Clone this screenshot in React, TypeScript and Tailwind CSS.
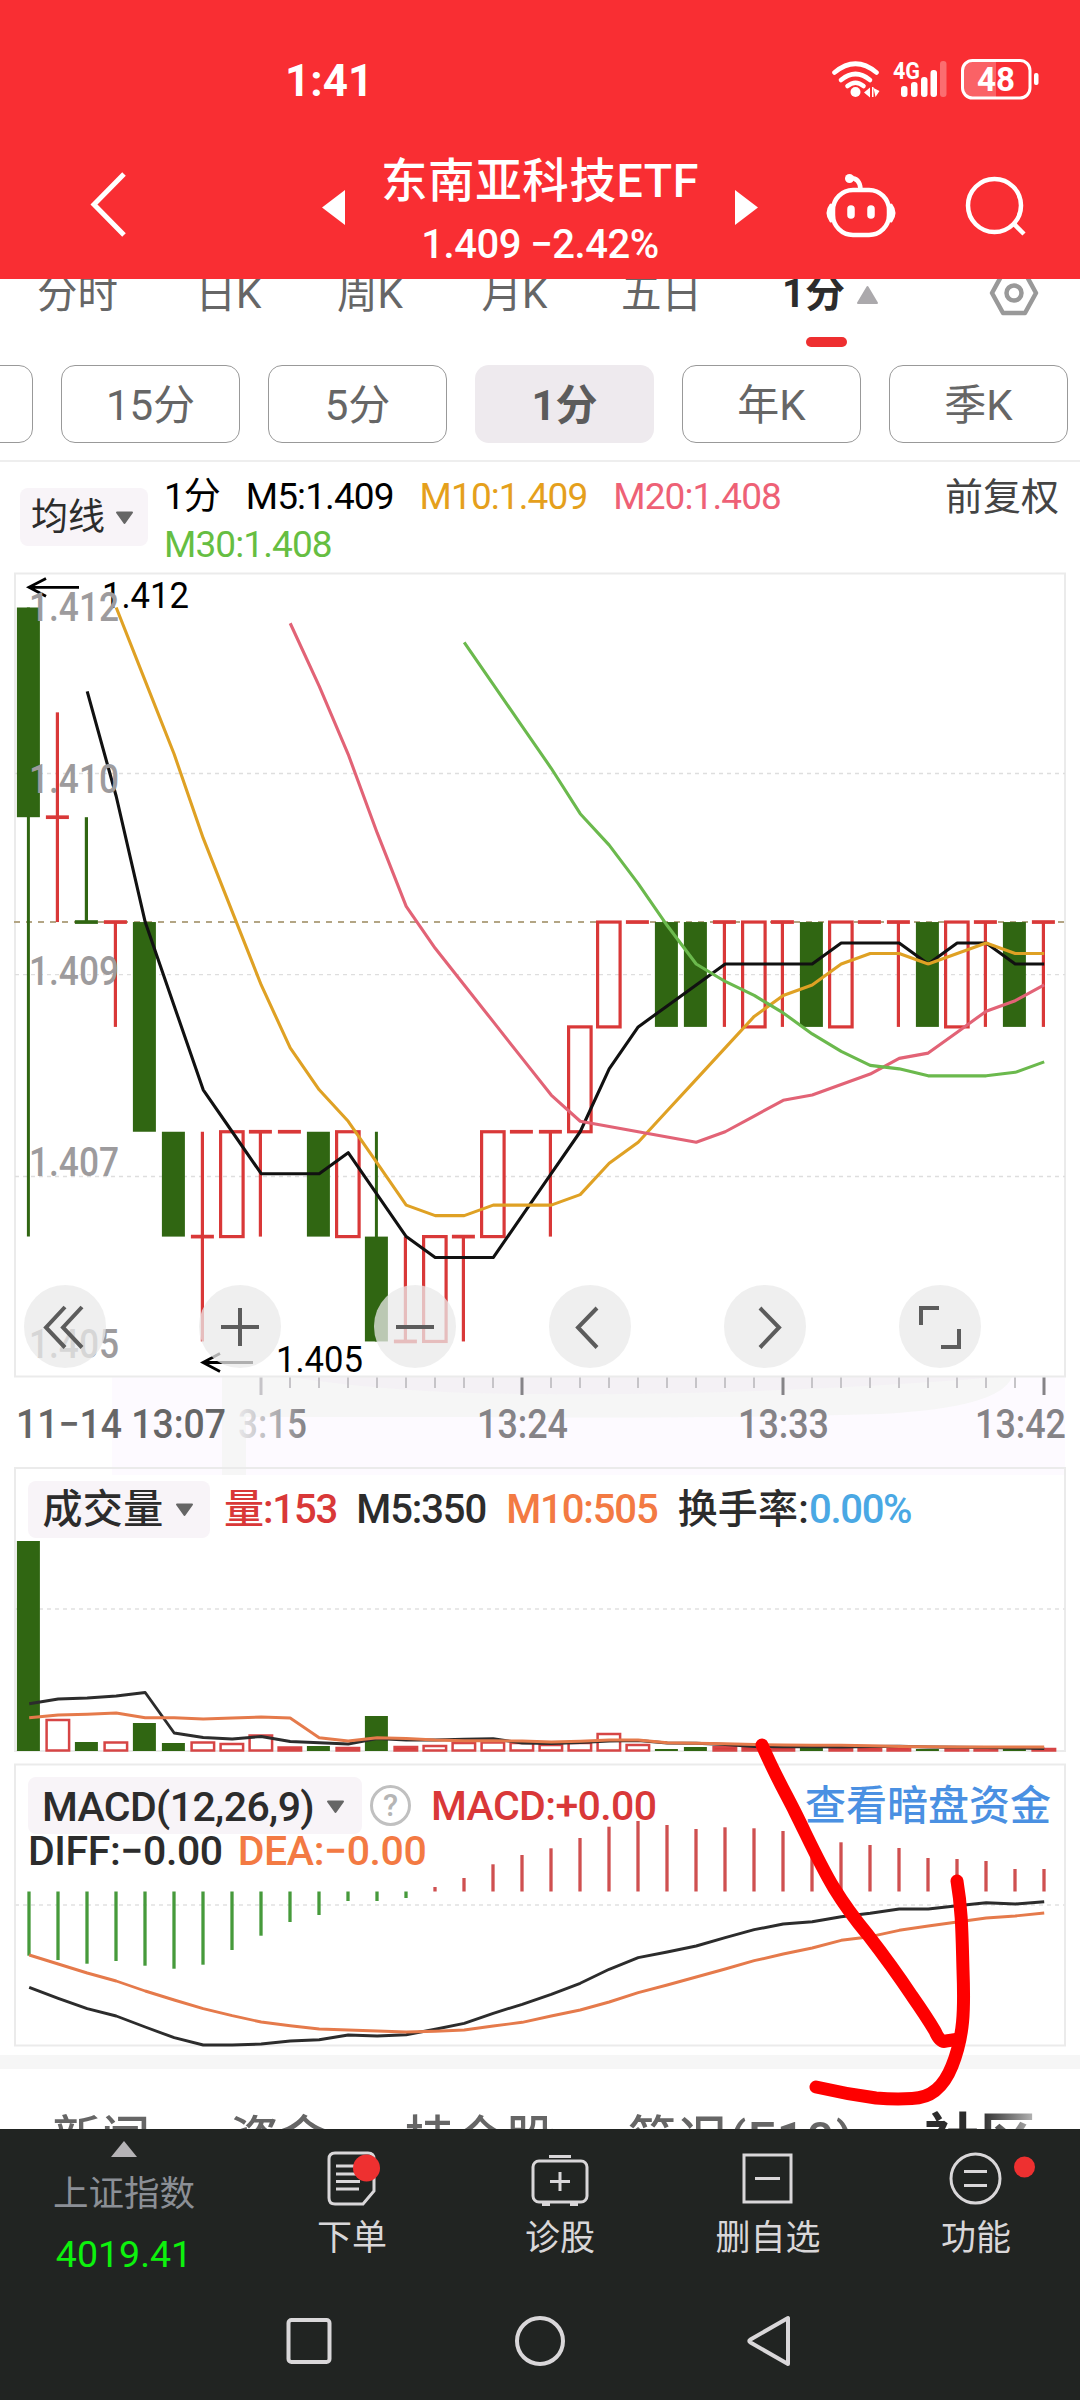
import type { ReactNode } from 'react';

const STEP = 29;
const X0 = 28.4;
const TOP = 607.5;
const UNIT = 104.85;

const cx = (i: number) => X0 + i * STEP;
const ly = (level: number) => TOP + level * UNIT;

// levels are price steps below the session high (0 = 1.412)
interface Candle {
  open: number;
  close: number;
  high?: number;
  low?: number;
  down?: boolean;
}

const candles: Candle[] = [
  { open: 0, close: 2, low: 6 },
  { open: 2, close: 2, high: 1, low: 3 },
  { open: 3, close: 3, high: 2, down: true },
  { open: 3, close: 3, low: 4 },
  { open: 3, close: 5 },
  { open: 5, close: 6 },
  { open: 6, close: 6, high: 5, low: 7 },
  { open: 6, close: 5 },
  { open: 5, close: 5, low: 6 },
  { open: 5, close: 5 },
  { open: 5, close: 6 },
  { open: 6, close: 5 },
  { open: 6, close: 7, high: 5 },
  { open: 7, close: 7, high: 6 },
  { open: 7, close: 6 },
  { open: 6, close: 6, low: 7 },
  { open: 6, close: 5 },
  { open: 5, close: 5 },
  { open: 5, close: 5, low: 6 },
  { open: 5, close: 4 },
  { open: 4, close: 3 },
  { open: 3, close: 3 },
  { open: 3, close: 4 },
  { open: 3, close: 4 },
  { open: 3, close: 3, low: 4 },
  { open: 4, close: 3 },
  { open: 3, close: 3, low: 4 },
  { open: 3, close: 4 },
  { open: 4, close: 3 },
  { open: 3, close: 3 },
  { open: 3, close: 3, low: 4 },
  { open: 3, close: 4 },
  { open: 4, close: 3 },
  { open: 3, close: 3, low: 4 },
  { open: 3, close: 4 },
  { open: 3, close: 3, low: 4 },
];

// closes of the bars left of the visible window, needed for the averages
const history = [-7, -7, -7, -9, -6, -8, -8, -7, -2, -1, -2, -2, -2, -1];
const closes = [...history, ...candles.map((c) => c.close)];

function average(n: number) {
  const points: string[] = [];
  candles.forEach((_, i) => {
    const end = i + history.length + 1;
    if (end < n) return;
    const value = closes.slice(end - n, end).reduce((a, b) => a + b, 0) / n;
    if (value >= 0) points.push(`${cx(i) + 0.8},${ly(value)}`);
  });
  return points.join(' ');
}

const line = (values: number[]) => values.map((v, i) => `${cx(i) + 0.8},${v}`).join(' ');

// g = filled green, r = hollow red
const volumes: [string, number][] = [
  ['g', 210], ['r', 31], ['g', 9], ['r', 8.5], ['g', 28], ['g', 8], ['r', 8.5], ['r', 7], ['r', 15.5],
  ['r', 3.5], ['g', 5], ['r', 3], ['g', 35], ['r', 4], ['r', 5], ['r', 8], ['r', 8.5], ['r', 8],
  ['r', 6], ['r', 8], ['r', 17], ['r', 6], ['g', 2], ['g', 4], ['r', 4], ['r', 4], ['r', 4],
  ['g', 3.5], ['r', 3.5], ['r', 4], ['r', 4], ['g', 2], ['r', 3], ['r', 3], ['g', 2], ['r', 2],
];
const volM5 = [
  1703.7, 1699, 1698, 1696, 1692.5, 1733, 1737.5, 1739, 1736.5, 1741.5, 1742.7, 1744, 1738.5, 1740, 1740,
  1739.3, 1738.7, 1743, 1743.5, 1742.5, 1741, 1740.5, 1743, 1743.3, 1744.5, 1746.5, 1746.7, 1746.7, 1747,
  1746.5, 1746.3, 1747, 1747.2, 1747.5, 1748, 1748.5,
];
const volM10 = [
  1717.7, 1715, 1714.3, 1713, 1717.7, 1717.7, 1719, 1718, 1717, 1718, 1737.7, 1741, 1737.7, 1738.5, 1740,
  1740.7, 1740.7, 1741, 1742, 1741.3, 1740, 1740, 1742.7, 1743.2, 1743.7, 1744.5, 1745, 1745.3, 1745.3,
  1745.7, 1746.5, 1746.7, 1747, 1747, 1747, 1747,
];

const macd = [
  1955.7, 1960, 1963.7, 1961, 1965.7, 1968.7, 1964.7, 1950, 1935.7, 1922, 1915, 1901, 1901, 1898, 1887,
  1878, 1864.3, 1855, 1848.3, 1838, 1826.7, 1821, 1825, 1829, 1827.3, 1828.3, 1831, 1838.3, 1842.3, 1845,
  1848, 1858, 1859, 1861, 1869, 1869,
];
const diff = [
  1987.3, 1998.3, 2008.7, 2016, 2027, 2037.7, 2045, 2045, 2044, 2041, 2039.7, 2035, 2036, 2034.7, 2029.3,
  2023.3, 2013.3, 2004.3, 1994.3, 1983.3, 1969.3, 1957.7, 1952, 1946, 1937.7, 1929.7, 1924, 1921.7, 1916.7,
  1913.3, 1909, 1909, 1905.7, 1902.7, 1904, 1901.7,
];
const dea = [
  1955, 1964, 1973, 1981, 1991, 2000, 2008.7, 2015.7, 2022, 2025.7, 2029, 2030, 2031, 2032, 2031.3, 2030,
  2026, 2022.3, 2016, 2010, 2002, 1992.7, 1985, 1977, 1969, 1960.7, 1954, 1948, 1940.3, 1936.7, 1930.3,
  1926, 1922, 1918, 1916, 1913,
];

const RED = '#d93838';
const GREEN = '#306612';

function StatusBar() {
  return (
    <div className="flex h-[158px] items-start pt-[56px]">
      <span className="ml-[285px] text-[44px] leading-[50px] font-bold">1:41</span>
      <svg className="mt-[1px] ml-auto mr-[38px]" width="214" height="50" viewBox="828 57 214 50" fill="none">
        <g stroke="#fff" strokeWidth="4.6" strokeLinecap="round">
          <path d="M834.500 72.500q21-17.500 42 0" />
          <path d="M841 80q14.500-12 29 0" />
          <path d="M847.500 86q8-6.500 16 0" />
        </g>
        <circle cx="855.500" cy="92" r="5" fill="#fff" />
        <path d="M864 92.500l6-5v10zM872 87l1.500 0v10h-1.500zM873.500 88l6 3-4 6z" fill="#fff" />
        <text x="893" y="79" fontSize="23" fontWeight="700" fill="#fff" textLength="27" lengthAdjust="spacingAndGlyphs">
          4G
        </text>
        <g fill="#fff">
          <rect x="901" y="86" width="6.500" height="11" rx="3" />
          <rect x="911" y="82" width="6.500" height="15" rx="3" />
          <rect x="921" y="77" width="6.500" height="20" rx="3" />
          <rect x="930.500" y="70" width="6.500" height="27" rx="3" />
          <rect x="940" y="61" width="6.500" height="36" rx="3" opacity=".3" />
        </g>
        <path d="M972 61h24v36h-24q-10 0-10-9v-18q0-9 10-9z" fill="#fff" opacity=".25" />
        <rect x="962.500" y="60.500" width="67.500" height="37.500" rx="10" stroke="#fff" strokeWidth="3" />
        <rect x="1034" y="73" width="4.500" height="12" rx="2" fill="#fff" />
        <text x="977" y="91" fontSize="33" fontWeight="700" fill="#fff" textLength="38" lengthAdjust="spacingAndGlyphs">
          48
        </text>
      </svg>
    </div>
  );
}

function TitleBar() {
  return (
    <div className="flex h-[121px] items-start">
      <svg className="mt-[12px] ml-[86px]" width="44" height="70" viewBox="0 0 44 70">
        <path d="M38 4L8 34.500l30 30.500" fill="none" stroke="#fff" strokeWidth="5" />
      </svg>
      <svg className="mt-[31px] ml-[191px]" width="24" height="37" viewBox="0 0 24 37">
        <path d="M24 1v35L1 18.500z" fill="#fff" />
      </svg>
      <div className="flex w-[390px] flex-col items-center">
        <h1 className="mt-[-6px] text-[46.5px] leading-[58px] font-medium tracking-[0.6px] whitespace-nowrap">
          东南亚科技ETF
        </h1>
        <p className="mt-[12px] text-[40px] leading-[46px] font-medium tracking-[-0.5px]">1.409 −2.42%</p>
      </div>
      <svg className="mt-[31px]" width="24" height="37" viewBox="0 0 24 37">
        <path d="M0 1v35l23-17.500z" fill="#fff" />
      </svg>
      <svg className="mt-[12px] ml-[65px]" width="76" height="70" viewBox="824 170 76 70" fill="none" stroke="#fff">
        <rect x="833" y="190" width="56" height="45" rx="20" strokeWidth="4.500" />
        <path d="M831 205q-6 8 0 16zM891 205q6 8 0 16z" fill="#fff" strokeWidth="3" strokeLinejoin="round" />
        <path d="M850 178q10 0 10.500 11" strokeWidth="4.500" />
        <circle cx="849.500" cy="178.500" r="4.500" fill="#fff" stroke="none" />
        <path d="M851 209v6M871 209v6" strokeWidth="7.500" strokeLinecap="round" />
      </svg>
      <svg className="mt-[12px] ml-[62px]" width="70" height="70" viewBox="962 170 70 70" fill="none" stroke="#fff">
        <circle cx="994.500" cy="205.500" r="26.500" strokeWidth="4.500" />
        <path d="M1013 223l11 11" strokeWidth="4.500" />
      </svg>
    </div>
  );
}

const periodTabs = [
  { label: '分时', width: 'w-[155px]' },
  { label: '日K', width: 'w-[147px]' },
  { label: '周K', width: 'w-[136px]' },
  { label: '月K', width: 'w-[153px]' },
  { label: '五日', width: 'w-[141px]' },
];

function PeriodTabs() {
  return (
    <div className="h-[86px] overflow-hidden">
      <div className="-mt-[13px] flex h-[56px] items-center text-[40.5px] text-[#666]">
        {periodTabs.map((tab) => (
          <span key={tab.label} className={`${tab.width} text-center`}>
            {tab.label}
          </span>
        ))}
        <span className="ml-[50px] text-[40px] font-bold text-[#2c2c2c]">1分</span>
        <svg className="mt-[1px] ml-[11px]" width="23" height="20" viewBox="0 0 23 20">
          <path d="M11.500 2l9.500 16H2z" fill="#aba9ac" stroke="#aba9ac" strokeWidth="2" strokeLinejoin="round" />
        </svg>
        <svg className="-mt-[3px] ml-auto mr-[41px]" width="50" height="50" viewBox="0 0 50 50" fill="none" stroke="#999">
          <path d="M3 25L14 5h22l11 20-11 20H14z" strokeWidth="4.500" strokeLinejoin="round" />
          <circle cx="25" cy="25" r="7.500" strokeWidth="4.500" />
        </svg>
      </div>
      <div className="mt-[15px] ml-[806px] h-[10px] w-[41px] rounded-[5px] bg-[#ee2f30]" />
    </div>
  );
}

function MinutePills() {
  const pill = 'flex h-[78px] w-[179px] shrink-0 items-center justify-center rounded-[14px] pt-[3px] text-[42px]';
  return (
    <div className="flex h-[97px] gap-[28px] overflow-hidden border-b-2 border-[#eee]">
      <div className="-ml-[146px] h-[78px] w-[179px] shrink-0 rounded-[14px] border-[1.5px] border-[#999]" />
      {['15分', '5分', '1分', '年K', '季K'].map((label) => (
        <div
          key={label}
          className={`${pill} ${label === '1分' ? 'bg-[#eeeaee] font-bold text-[#5c5c5c]' : 'border-[1.5px] border-[#999] text-[#666]'}`}
        >
          {label}
        </div>
      ))}
    </div>
  );
}

function Caret() {
  return (
    <svg width="19" height="14" viewBox="0 0 19 14">
      <path d="M2 1.500h15L9.500 12z" fill="#666" stroke="#666" strokeWidth="2" strokeLinejoin="round" />
    </svg>
  );
}

function AverageLegend() {
  return (
    <div className="flex h-[102px] items-start pt-[10px] text-[37px] leading-[50px]">
      <div className="mt-[16px] ml-[20px] flex h-[58px] w-[128px] items-center justify-center gap-[10px] rounded-[8px] bg-[#f8f4f8] pt-[2px] pr-[3px] text-[37px] text-[#2c2c2c]">
        均线
        <Caret />
      </div>
      <div className="ml-[16px] flex w-[660px] flex-wrap gap-x-[26px] tracking-[-0.9px] text-black">
        <span className="tracking-[-1px]">1分</span>
        <span>M5:1.409</span>
        <span className="text-[#e5a01c]">M10:1.409</span>
        <span className="text-[#ee6176]">M20:1.408</span>
        <span className="-mt-[2px] text-[#66be42]">M30:1.408</span>
      </div>
      <span className="ml-auto mr-[21px] text-[38px] text-[#444]">前复权</span>
    </div>
  );
}

function CandleBar({ candle, index }: { candle: Candle; index: number }) {
  const { open, close, high = Math.min(open, close), low = Math.max(open, close) } = candle;
  const x = cx(index);
  const green = close > open || candle.down;
  const color = green ? GREEN : RED;
  if (open === close) {
    return (
      <g stroke={color} strokeWidth="3.700">
        <path d={`M${x - 11.5} ${ly(open)}h23`} />
        <path d={`M${x} ${ly(high)}V${ly(low)}`} strokeWidth="3.200" />
      </g>
    );
  }
  const y = ly(Math.min(open, close));
  const h = Math.abs(open - close) * UNIT;
  return (
    <g>
      {(high < Math.min(open, close) || low > Math.max(open, close)) && (
        <path d={`M${x} ${ly(high)}V${ly(low)}`} stroke={color} strokeWidth="3" />
      )}
      {green ? (
        <rect x={x - 11.5} y={y} width="23" height={h} fill={color} />
      ) : (
        <rect x={x - 10.8} y={y} width="22.500" height={h} fill="none" stroke={color} strokeWidth="3.200" />
      )}
    </g>
  );
}

const priceLabels: [string, number][] = [
  ['1.412', 621.3],
  ['1.410', 793],
  ['1.409', 985],
  ['1.407', 1175.7],
  ['1.405', 1357.7],
];

const toolIcons = [
  'M41 21L22 41.500l19 20M58 21L39 41.500l19 20',
  'M41 22v38M22 41h38',
  'M22 41h38',
  'M48 22L29 41.500l19 20',
  'M36 22l19 19.500-19 20',
  'M22 39V22h18M60 43v18H42',
];

function PriceChart() {
  return (
    <div className="relative h-[900px]">
      <svg width="1080" height="900" viewBox="0 564 1080 900">
        <defs>
          <linearGradient id="fade" gradientUnits="userSpaceOnUse" x1="235" x2="305" y1="0" y2="0">
            <stop offset="0" stopColor="#eeedef" />
            <stop offset="1" stopColor="#858387" />
          </linearGradient>
        </defs>
        <path d="M112 1377H1065V1464H112z" fill="#fdfaff" />
        <path d="M222 1377H1012Q1000 1408 880 1414Q700 1419 480 1417H246V1464H222z" fill="#f6f6f6" />
        <path d="M290 1377H1000Q760 1396 540 1394Q400 1394 290 1377z" fill="#f4f1f5" />
        <rect x="15" y="573.500" width="1050" height="803" fill="none" stroke="#ebebeb" strokeWidth="2" />
        <path d="M15 773.500H1065M15 974.700H1065M15 1176.500H1065" stroke="#dedede" strokeWidth="1.300" strokeDasharray="4 4" />
        <path d="M14 922H1065" stroke="#b3a584" strokeWidth="2" strokeDasharray="6 6" />
        {candles.map((c, i) => (
          <CandleBar key={i} candle={c} index={i} />
        ))}
        <g fill="none" strokeWidth="3.100" strokeLinejoin="round">
          <polyline points={average(5)} stroke="#111" />
          <polyline points={average(10)} stroke="#dfa124" />
          <polyline points={average(20)} stroke="#e26376" />
          <polyline points={average(30)} stroke="#6bb94d" />
        </g>
        <g fill="none" stroke="#000" strokeWidth="2.800">
          <path d="M79 587.300H29M46 578.500L29 587.300l17 9" />
          <path d="M253 1362.500H203M220 1353.500L203 1362.500l17 9" />
        </g>
        <g fill="#000" fontSize="36">
          <text x="102" y="608" textLength="87" lengthAdjust="spacingAndGlyphs">1.412</text>
          <text x="276" y="1372" textLength="87" lengthAdjust="spacingAndGlyphs">1.405</text>
        </g>
        <g fill="#9d9b9d" fontSize="40.500" fontWeight="500">
          {priceLabels.map(([label, y]) => (
            <text key={label} x="29" y={y} textLength="90" lengthAdjust="spacingAndGlyphs">
              {label}
            </text>
          ))}
        </g>
        {Array.from({ length: 28 }, (_, k) => k + 8).map((i) => (
          <path
            key={i}
            d={`M${cx(i) + 0.6} 1377.500V${(i - 8) % 9 === 0 ? 1395 : 1388}`}
            stroke={(i - 8) % 9 === 0 && i > 8 ? '#858387' : '#c6c4c8'}
            strokeWidth={(i - 8) % 9 === 0 ? 3 : 2}
          />
        ))}
        <g fill="#858387" fontSize="40.500" fontWeight="500">
          <text x="16" y="1437.700" fill="#666" textLength="210" lengthAdjust="spacingAndGlyphs">11−14 13:07</text>
          <text x="238" y="1437.700" fill="url(#fade)" textLength="69" lengthAdjust="spacingAndGlyphs">3:15</text>
          <text x="477" y="1437.700" textLength="91" lengthAdjust="spacingAndGlyphs">13:24</text>
          <text x="738" y="1437.700" textLength="91" lengthAdjust="spacingAndGlyphs">13:33</text>
          <text x="975" y="1437.700" textLength="91" lengthAdjust="spacingAndGlyphs">13:42</text>
        </g>
      </svg>
      <div className="absolute top-[721px] left-[24px] flex gap-[93px]">
        {toolIcons.map((d) => (
          <button key={d} className="h-[83px] w-[82px] rounded-full bg-[#e9e9e9]/75">
            <svg width="82" height="82" viewBox="0 0 82 82" fill="none" stroke="#5c5c5c" strokeWidth="4">
              <path d={d} />
            </svg>
          </button>
        ))}
      </div>
    </div>
  );
}

function VolumeChart() {
  return (
    <div className="relative h-[294px]">
      <svg className="absolute inset-0" width="1080" height="294" viewBox="0 1464 1080 294">
        <path d="M112 1464H1065V1475H112z" fill="#fdfaff" />
        <path d="M222 1464H246V1475H222z" fill="#f6f6f6" />
        <rect x="15" y="1468" width="1050" height="283" fill="none" stroke="#ebebeb" strokeWidth="2" />
        <path d="M15 1609H1065" stroke="#e8e8e8" strokeWidth="2" strokeDasharray="4 4" />
        {volumes.map(([kind, h], i) =>
          kind === 'g' ? (
            <rect key={i} x={cx(i) - 11.5} y={1751 - h} width="23" height={h} fill={GREEN} />
          ) : (
            <rect
              key={i}
              x={cx(i) - 10.8}
              y={1751 - h}
              width="22.500"
              height={Math.max(h - 0.5, 0.5)}
              fill={h < 5 ? RED : 'none'}
              stroke="#d64545"
              strokeWidth="2.500"
            />
          ),
        )}
        <g fill="none" strokeWidth="2.900" strokeLinejoin="round">
          <polyline points={line(volM5)} stroke="#2c2c2c" />
          <polyline points={line(volM10)} stroke="#e57a4b" />
        </g>
      </svg>
      <div className="relative flex items-center pt-[17px] pl-[28px] text-[40px] leading-[57px] font-medium tracking-[-1.1px]">
        <div className="flex h-[57px] w-[182px] items-center justify-center gap-[11px] rounded-[8px] bg-[#f8f4f8] pr-[2px] tracking-[0.4px] text-[#2c2c2c]">
          成交量
          <Caret />
        </div>
        <span className="ml-[14px] text-[#d93838]">量:153</span>
        <span className="ml-[19px] text-[#2c2c2c]">M5:350</span>
        <span className="ml-[20px] text-[#f37a43]">M10:505</span>
        <span className="ml-[20px] tracking-[0.2px] text-[#2c2c2c]">换手率:</span>
        <span className="tracking-[-1.3px] text-[#4aa8e4]">0.00%</span>
      </div>
    </div>
  );
}

function MacdChart() {
  return (
    <div className="relative h-[297px]">
      <svg className="absolute inset-0" width="1080" height="297" viewBox="0 1758 1080 297">
        <rect x="15" y="1764.500" width="1050" height="281" fill="none" stroke="#ebebeb" strokeWidth="2" />
        <path d="M15 1905H1065" stroke="#e8e8e8" strokeWidth="2" strokeDasharray="4 4" />
        {macd.map((y, i) => (
          <path
            key={i}
            d={`M${cx(i) + 0.6} 1891.500V${y}`}
            stroke={y > 1891 ? '#469a3b' : '#cf5050'}
            strokeWidth="3.300"
          />
        ))}
        <g fill="none" strokeWidth="2.900" strokeLinejoin="round">
          <polyline points={line(diff)} stroke="#2c2c2c" />
          <polyline points={line(dea)} stroke="#e57a4b" />
        </g>
      </svg>
      <div className="relative flex items-center pt-[18px] pl-[28px] text-[41px] leading-[57px] font-medium tracking-[-0.6px] text-[#2c2c2c]">
        <div className="flex h-[57px] w-[334px] items-center justify-center gap-[12px] rounded-[8px] bg-[#f8f4f8] pt-[3px] pr-[3px]">
          MACD(12,26,9)
          <Caret />
        </div>
        <div className="ml-[8px] flex h-[41px] w-[41px] items-center justify-center rounded-full border-3 border-[#c0c0c0] text-[31px] tracking-normal text-[#b5b5b5]">
          ?
        </div>
        <span className="mt-[2px] ml-[20px] text-[#d93838]">MACD:+0.00</span>
        <span className="mt-[2px] ml-auto mr-[29px] tracking-normal text-[#4a90e2]">查看暗盘资金</span>
      </div>
      <div className="relative -mt-[8px] ml-[28px] flex gap-[15px] text-[41px] leading-[48px] font-medium tracking-[-0.4px] text-[#2c2c2c]">
        <span>DIFF:−0.00</span>
        <span className="text-[#f37a43]">DEA:−0.00</span>
      </div>
    </div>
  );
}

function InfoTabs() {
  return (
    <div className="h-[60px] overflow-hidden pt-[39px] text-[49px] leading-[64px] whitespace-nowrap text-[#666]">
      <div className="flex font-medium">
        <span className="ml-[52px]">新闻</span>
        <span className="ml-[80px]">资金</span>
        <span className="ml-[77px] tracking-[1.5px]">持仓股</span>
        <span className="ml-[71px] tracking-[1.8px]">简况(F10)</span>
        <span className="ml-auto mr-[44px] bg-linear-to-r from-[#2c2c2c] from-50% to-[#bbb] bg-clip-text text-[56px] font-bold text-transparent">
          社区
        </span>
      </div>
    </div>
  );
}

function NavItem({ label, children }: { label: string; children: ReactNode }) {
  return (
    <div className="flex w-[208px] flex-col items-center pt-[16px]">
      <svg width="120" height="66" viewBox="-60 -33 120 66" fill="none" stroke="#d9d7d9" strokeWidth="3">
        {children}
      </svg>
      <span className="mt-[5px] text-[35px] leading-[46px] text-[#d9d7d9]">{label}</span>
    </div>
  );
}

function BottomNav() {
  return (
    <div className="flex h-[165px]">
      <div className="flex w-[248px] flex-col items-center">
        <svg className="mt-[12px]" width="26" height="16" viewBox="0 0 26 16">
          <path d="M13 0l13 16H0z" fill="#b5b3b6" />
        </svg>
        <span className="mt-[14px] text-[35.500px] leading-[46px] text-[#8b8f96]">上证指数</span>
        <span className="mt-[15px] text-[37.500px] leading-[44px] text-[#0df20d]">4019.41</span>
      </div>
      <NavItem label="下单">
        <path d="M-17 -25h33q6 0 6 6V13L11 26H-17q-6 0-6-6V-19q0-6 6-6z" />
        <path d="M-16 -12H4M-16 -4H4M-16 3.500H8M-16 11H7" />
        <circle cx="14.500" cy="-10" r="13.500" fill="#ee3030" stroke="none" />
      </NavItem>
      <NavItem label="诊股">
        <rect x="-27" y="-17" width="54" height="41" rx="6" />
        <path d="M-11 -21.500H11M0 -6V13M-10 3.500H10" />
        <path d="M-18 26h8M10 26h8" strokeWidth="4" />
      </NavItem>
      <NavItem label="删自选">
        <rect x="-24" y="-23" width="47" height="47" />
        <path d="M-13 0.500H12" />
      </NavItem>
      <NavItem label="功能">
        <circle cx="-0.500" cy="0.500" r="24.500" />
        <path d="M-12 -6.500H11M-12 7.500H11" />
        <circle cx="48.500" cy="-11" r="10.500" fill="#ee3030" stroke="none" />
      </NavItem>
    </div>
  );
}

function SystemNav() {
  return (
    <svg width="1080" height="106" viewBox="0 2294 1080 106" fill="none" stroke="#d9d7d9" strokeWidth="4">
      <rect x="288.500" y="2320" width="41" height="42" rx="3" />
      <circle cx="540" cy="2341" r="23" />
      <path d="M788 2318v46L750.500 2342.500q-2.500-1.500 0-3z" strokeLinejoin="round" />
    </svg>
  );
}

// freehand marker strokes over the page
function Doodle() {
  return (
    <svg
      className="absolute top-0 left-0"
      width="1080"
      height="2400"
      viewBox="0 0 1080 2400"
      fill="none"
      stroke="#fe0000"
      strokeWidth="13"
      strokeLinecap="round"
      strokeLinejoin="round"
    >
      <path d="M762 1745C775 1775 785 1792 795 1812C808 1838 820 1865 834 1888Q848 1911 868 1935Q892 1966 912 1996Q926 2016 935 2031Q940 2043 946 2041L956 2039.500" />
      <path d="M957 1881C962 1910 962 1935 963 1970C964.500 2010 964 2036 952 2066C944 2086 932 2098 912 2098.500Q895 2099.500 876 2098Q846 2094 816 2087" />
    </svg>
  );
}

export default function App() {
  return (
    <div className="relative flex h-[2400px] w-[1080px] flex-col overflow-hidden bg-white font-['Roboto','Noto_Sans_CJK_SC',sans-serif]">
      <header className="h-[279px] shrink-0 bg-[#f92e33] text-white">
        <StatusBar />
        <TitleBar />
      </header>
      <main className="h-[1850px] shrink-0 overflow-hidden">
        <PeriodTabs />
        <MinutePills />
        <AverageLegend />
        <PriceChart />
        <VolumeChart />
        <MacdChart />
        <div className="h-[14px] bg-[#f6f6f6]" />
        <InfoTabs />
      </main>
      <footer className="h-[271px] shrink-0 bg-[#212422]">
        <BottomNav />
        <SystemNav />
      </footer>
      <Doodle />
    </div>
  );
}
